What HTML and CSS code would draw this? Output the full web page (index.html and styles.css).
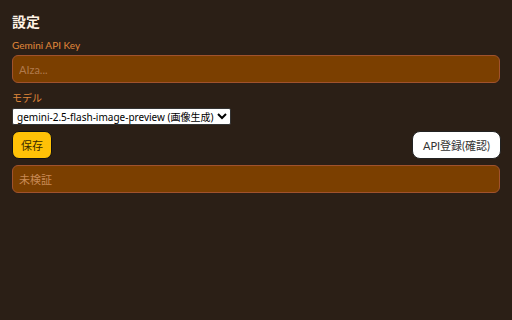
FILE: index.html
```html
<!DOCTYPE html>
<html lang="ja">
<head>
<meta charset="utf-8">
<link rel="stylesheet" href="styles.css">
</head>
<body>
<div class="page">
  <h1 class="title">設定</h1>
  <label class="label" for="key">Gemini API Key</label>
  <input class="field" id="key" type="text" placeholder="AIza...">
  <label class="label label-model" for="model">モデル</label>
  <select class="select" id="model">
    <option>gemini-2.5-flash-image-preview (画像生成)</option>
  </select>
  <div class="actions">
    <button class="btn btn-save">保存</button>
    <button class="btn btn-api">API登録(確認)</button>
  </div>
  <div class="status">未検証</div>
</div>
</body>
</html>
```
FILE: styles.css
```css
html, body {
  margin: 0;
  padding: 0;
  background: #2b1f16;
}
body {
  font-family: Lato, "Noto Sans CJK JP", sans-serif;
  color: #f3e6d8;
}
.page {
  padding: 11px 12px;
  display: flex;
  flex-direction: column;
}
.title {
  margin: 0;
  font-size: 14px;
  font-weight: 700;
  line-height: 20px;
  color: #fff3e6;
  font-family: "Noto Sans CJK JP", sans-serif;
}
.label {
  font-size: 10px;
  line-height: 14px;
  color: #e0883a;
  margin-top: 7px;
}
.label-model {
  margin-top: 8px;
  font-family: "Noto Sans CJK JP", sans-serif;
}
.field {
  margin-top: 3px;
  box-sizing: border-box;
  width: 100%;
  height: 28px;
  background: #7b3f00;
  border: 1px solid #a0522d;
  border-radius: 6px;
  padding: 0 6px;
  font: 11px Lato, sans-serif;
  color: #f3e6d8;
  outline: none;
}
.field::placeholder {
  color: #b07a4c;
}
.select {
  margin-top: 3px;
  align-self: flex-start;
  box-sizing: border-box;
  height: 17px;
  font: 10px "Noto Sans", "Noto Sans CJK JP", sans-serif;
  color: #000;
  background: #fff;
  border: 1px solid #333;
  border-radius: 2px;
  padding: 0;
}
.actions {
  margin-top: 6px;
  display: flex;
  justify-content: space-between;
  align-items: center;
}
.btn {
  box-sizing: border-box;
  height: 28px;
  border-radius: 7px;
  font: 11px Lato, "Noto Sans CJK JP", sans-serif;
  padding: 0 8px;
  cursor: pointer;
}
.btn-save {
  background: #ffc107;
  border: 1px solid #111;
  color: #3a2a00;
}
.btn-api {
  background: #fff;
  border: 1px solid #222;
  color: #333;
  border-radius: 8px;
  padding: 0 10px;
  margin-right: -1px;
}
.status {
  margin-top: 6px;
  box-sizing: border-box;
  height: 28px;
  background: #7b3f00;
  border: 1px solid #a0522d;
  border-radius: 6px;
  padding: 0 6px;
  display: flex;
  align-items: center;
  font: 11px "Noto Sans CJK JP", sans-serif;
  color: #c98a55;
}
```
